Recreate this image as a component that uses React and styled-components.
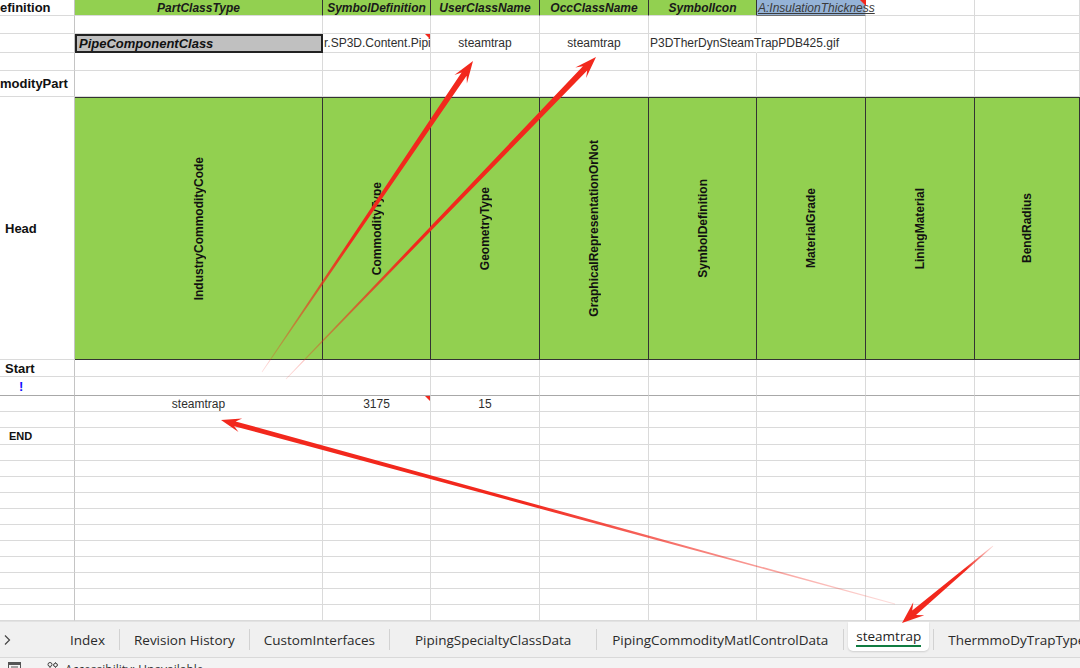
import React from "react";
import styled, { createGlobalStyle } from "styled-components";

const GlobalStyle = createGlobalStyle`
  html, body { margin: 0; padding: 0; background: #fff; }
  body { font-family: "Liberation Sans", Arial, sans-serif; overflow: hidden; }
`;

const COLUMNS = "75px 248px 108px 109px 109px 108px 109px 109px 1fr";
const GREEN = "#92d050";
const GRID = "#dadada";
const EDGE = "#333333";
const RED = "#f2281d";

const Window = styled.div`
  position: relative;
  width: 1080px;
  height: 668px;
  overflow: hidden;
  display: flex;
  flex-direction: column;
`;

const Sheet = styled.div`
  display: flex;
  flex-direction: column;
  background: #fff;
`;

const Row = styled.div`
  display: grid;
  grid-template-columns: ${COLUMNS};
  height: ${(p) => p.$h}px;
`;

const Cell = styled.div`
  position: relative;
  box-sizing: border-box;
  display: flex;
  align-items: center;
  justify-content: ${(p) => (p.$center ? "center" : "flex-start")};
  padding: 0 1px;
  min-width: 0;
  border-right: 1px solid ${(p) => (p.$open ? "transparent" : GRID)};
  border-bottom: 1px solid ${(p) => (p.$rule ? "#a8a8a8" : GRID)};
  overflow: ${(p) => (p.$spill ? "visible" : "hidden")};
  z-index: ${(p) => (p.$spill ? 1 : 0)};
  white-space: nowrap;
  font-size: 12px;
  color: #2e2e2e;

  ${(p) =>
    p.$note &&
    `&::after {
      content: "";
      position: absolute;
      top: 0;
      right: -1px;
      border-top: 6px solid ${RED};
      border-left: 6px solid transparent;
    }`}
`;

const LabelCell = styled(Cell)`
  padding-left: ${(p) => p.$indent || 0}px;
  border-right-color: #c4c4c4;
  font-weight: bold;
  font-size: ${(p) => (p.$small ? 11 : 13)}px;
  color: ${(p) => (p.$blue ? "#1010ff" : "#111")};
`;

const HeadCell = styled(Cell)`
  justify-content: center;
  background: ${GREEN};
  border-right-color: ${EDGE};
  font-weight: bold;
  font-style: italic;
  color: #1a1a1a;
`;

const LinkCell = styled(Cell)`
  background: #95b3d7;
  border-bottom-color: #6f6f6f;
  font-size: 12px;
  font-style: italic;
  text-decoration: underline;
  color: #3b3b3b;
`;

const ClassCell = styled(Cell)`
  background: #c0c0c0;
  border: 2px solid #222;
  padding-left: 2px;
  font-size: 13px;
  font-weight: bold;
  font-style: italic;
  color: #111;
`;

const BandCell = styled(Cell)`
  justify-content: center;
  background: ${GREEN};
  border-top: 1px solid ${EDGE};
  border-right-color: ${EDGE};
  border-bottom-color: ${EDGE};
`;

const Upright = styled.span`
  writing-mode: vertical-rl;
  transform: rotate(180deg);
  font-weight: bold;
  font-size: 12px;
  color: #111;
`;

const TabBar = styled.div`
  height: 36px;
  display: flex;
  align-items: center;
  background: #f0f0f0;
  border-top: 1px solid #e2e2e2;
  box-sizing: border-box;
  font-family: "Open Sans", "Noto Sans", sans-serif;
  font-size: 13.5px;
  color: #2a2a2a;
  white-space: nowrap;
  overflow: hidden;
`;

const Chevron = styled.div`
  width: 54px;
  flex: 0 0 54px;
  padding-left: 2px;
  display: flex;
  align-items: center;
`;

const Tab = styled.div`
  padding: 0 ${(p) => p.$pad || 14}px;
  flex: 0 0 auto;
`;

const Divider = styled.span`
  flex: 0 0 1px;
  height: 21px;
  background: #d2d2d2;
`;

const ActiveTab = styled.div`
  align-self: flex-start;
  height: 29px;
  margin: 0 4px;
  padding: 0 8px;
  flex: 0 0 auto;
  display: flex;
  align-items: center;
  background: #fff;
  border-radius: 0 0 5px 5px;
  box-shadow: 0 1px 2px rgba(0, 0, 0, 0.14);
`;

const ActiveLabel = styled.span`
  padding-top: 2px;
  border-bottom: 2px solid #107c41;
  line-height: 17px;
  color: #1e1e1e;
`;

const StatusBar = styled.div`
  flex: 1;
  display: flex;
  align-items: flex-start;
  gap: 6px;
  padding: 4px 0 0 8px;
  background: #f3f3f3;
  border-top: 1px solid #d9d9d9;
  overflow: hidden;
  font-family: "Open Sans", "Noto Sans", sans-serif;
  font-size: 12px;
  line-height: 14px;
  color: #333;
`;

const StatusGap = styled.span`
  width: 12px;
`;

const StatusText = styled.span`
  margin-top: 1px;
`;

const Overlay = styled.svg`
  position: absolute;
  top: 0;
  left: 0;
  pointer-events: none;
  z-index: 5;
`;

// tapered callout arrow: hairline tail widening into a barbed head
function arrowShape([x1, y1], [x2, y2], shaft, headLen, headW) {
  const dx = x2 - x1;
  const dy = y2 - y1;
  const len = Math.hypot(dx, dy);
  const ux = dx / len;
  const uy = dy / len;
  const nx = -uy;
  const ny = ux;
  const notch = headLen * 0.72;
  const at = (back, side) =>
    `${(x2 - ux * back + nx * side).toFixed(1)},${(y2 - uy * back + ny * side).toFixed(1)}`;
  return [
    at(len, 0.4),
    at(notch, shaft / 2),
    at(headLen, headW / 2),
    `${x2},${y2}`,
    at(headLen, -headW / 2),
    at(notch, -shaft / 2),
    at(len, -0.4),
  ].join(" ");
}

const arrows = [
  { id: "a1", from: [262, 372], to: [473, 61], shaft: 6, head: 22, wide: 15, solid: 0.42 },
  { id: "a2", from: [286, 379], to: [596, 57], shaft: 6, head: 22, wide: 15, solid: 0.4 },
  { id: "a3", from: [895, 604], to: [221, 420], shaft: 5, head: 20, wide: 14, solid: 0.55 },
  { id: "a4", from: [993, 546], to: [902, 623], shaft: 6, head: 22, wide: 17, solid: 0.3 },
];

function Arrows() {
  return (
    <Overlay width="1080" height="668" viewBox="0 0 1080 668">
      <defs>
        {arrows.map((a) => (
          <linearGradient
            key={a.id}
            id={a.id}
            gradientUnits="userSpaceOnUse"
            x1={a.from[0]}
            y1={a.from[1]}
            x2={a.to[0]}
            y2={a.to[1]}
          >
            <stop offset="0" stopColor={RED} stopOpacity="0.15" />
            <stop offset={a.solid} stopColor={RED} stopOpacity="1" />
            <stop offset="1" stopColor={RED} stopOpacity="1" />
          </linearGradient>
        ))}
      </defs>
      {arrows.map((a) => (
        <polygon key={a.id} points={arrowShape(a.from, a.to, a.shaft, a.head, a.wide)} fill={`url(#${a.id})`} />
      ))}
    </Overlay>
  );
}

const blanks = (n, start = 0) =>
  Array.from({ length: n }, (_, i) => <Cell key={`b${start + i}`} />);

const bandHeads = [
  "IndustryCommodityCode",
  "CommodityType",
  "GeometryType",
  "GraphicalRepresentationOrNot",
  "SymbolDefinition",
  "MaterialGrade",
  "LiningMaterial",
  "BendRadius",
];

const sheetTabs = [
  { name: "Index" },
  { name: "Revision History" },
  { name: "CustomInterfaces" },
  { name: "PipingSpecialtyClassData", pad: 25 },
  { name: "PipingCommodityMatlControlData", pad: 15 },
];

function SheetIcon() {
  return (
    <svg width="13" height="11" viewBox="0 0 13 11">
      <rect x="0.5" y="0.5" width="12" height="10" fill="none" stroke="#555" />
      <rect x="0.5" y="0.5" width="12" height="2.5" fill="#555" />
      <line x1="3" y1="5" x2="10" y2="5" stroke="#555" />
    </svg>
  );
}

function AccessIcon() {
  return (
    <svg width="14" height="11" viewBox="0 0 14 11">
      <circle cx="5" cy="2.5" r="2" fill="none" stroke="#444" />
      <path d="M1 6.5h8M5 5v6" stroke="#444" fill="none" />
      <circle cx="10.5" cy="3" r="1.8" fill="none" stroke="#444" />
      <path d="M10.5 0.3v1M10.5 4.8v1M8 3h1M12 3h1" stroke="#444" />
    </svg>
  );
}

export default function App() {
  return (
    <Window>
      <GlobalStyle />
      <Sheet>
        <Row $h={16}>
          <LabelCell>efinition</LabelCell>
          <HeadCell>PartClassType</HeadCell>
          <HeadCell>SymbolDefinition</HeadCell>
          <HeadCell>UserClassName</HeadCell>
          <HeadCell>OccClassName</HeadCell>
          <HeadCell>SymbolIcon</HeadCell>
          <LinkCell $spill $note>A:InsulationThickness</LinkCell>
          {blanks(2)}
        </Row>

        <Row $h={18}>
          <LabelCell />
          {blanks(8)}
        </Row>

        <Row $h={19}>
          <LabelCell />
          <ClassCell>PipeComponentClass</ClassCell>
          <Cell $note>r.SP3D.Content.Piping</Cell>
          <Cell $center>steamtrap</Cell>
          <Cell $center>steamtrap</Cell>
          <Cell $spill $open>P3DTherDynSteamTrapPDB425.gif</Cell>
          {blanks(3)}
        </Row>

        <Row $h={18}>
          <LabelCell />
          {blanks(8)}
        </Row>

        <Row $h={26}>
          <LabelCell>modityPart</LabelCell>
          {blanks(8)}
        </Row>

        <Row $h={263}>
          <LabelCell $indent={5}>Head</LabelCell>
          {bandHeads.map((h) => (
            <BandCell key={h}>
              <Upright>{h}</Upright>
            </BandCell>
          ))}
        </Row>

        <Row $h={17}>
          <LabelCell $indent={5}>Start</LabelCell>
          {blanks(8)}
        </Row>

        <Row $h={19}>
          <LabelCell $indent={19} $blue $rule>!</LabelCell>
          {Array.from({ length: 8 }, (_, i) => (
            <Cell key={i} $rule />
          ))}
        </Row>

        <Row $h={16}>
          <LabelCell />
          <Cell $center>steamtrap</Cell>
          <Cell $center $note>3175</Cell>
          <Cell $center>15</Cell>
          {blanks(5)}
        </Row>

        <Row $h={16}>
          <LabelCell />
          {blanks(8)}
        </Row>

        <Row $h={17}>
          <LabelCell $indent={9} $small>END</LabelCell>
          {blanks(8)}
        </Row>

        {Array.from({ length: 11 }, (_, r) => (
          <Row key={r} $h={16}>
            <LabelCell />
            {blanks(8)}
          </Row>
        ))}
      </Sheet>

      <TabBar>
        <Chevron>
          <svg width="10" height="12" viewBox="0 0 10 12">
            <path d="M3 1.5l4.5 4.5L3 10.5" fill="none" stroke="#444" strokeWidth="1.2" />
          </svg>
        </Chevron>
        {sheetTabs.map((t) => (
          <React.Fragment key={t.name}>
            <Tab $pad={t.pad}>{t.name}</Tab>
            <Divider />
          </React.Fragment>
        ))}
        <ActiveTab>
          <ActiveLabel>steamtrap</ActiveLabel>
        </ActiveTab>
        <Divider />
        <Tab>ThermmoDyTrapTypes</Tab>
      </TabBar>

      <StatusBar>
        <SheetIcon />
        <StatusGap />
        <AccessIcon />
        <StatusText>Accessibility: Unavailable</StatusText>
      </StatusBar>

      <Arrows />
    </Window>
  );
}
